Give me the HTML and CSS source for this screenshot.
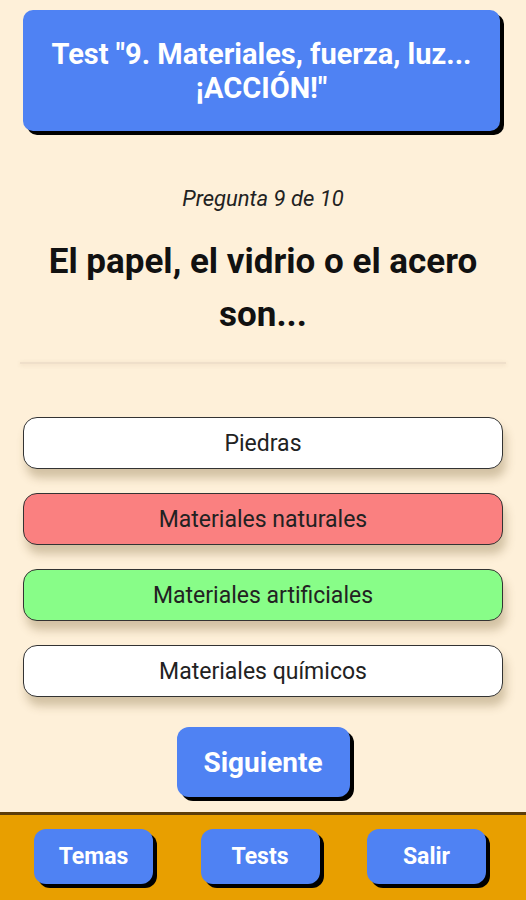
FILE: index.html
```html
<!DOCTYPE html>
<html lang="es">
<head>
    <meta charset="UTF-8">
    <meta name="viewport" content="width=device-width, initial-scale=1.0">
    <title>Test</title>
    <link rel="stylesheet" href="styles.css">
</head>
<body>
    <main>
        <header class="test-title">Test "9. Materiales, fuerza, luz... ¡ACCIÓN!"</header>

        <p class="counter">Pregunta 9 de 10</p>
        <h1 class="question">El papel, el vidrio o el acero son...</h1>
        <hr class="divider">

        <section class="answers">
            <button class="answer">Piedras</button>
            <button class="answer wrong">Materiales naturales</button>
            <button class="answer right">Materiales artificiales</button>
            <button class="answer">Materiales químicos</button>
        </section>

        <div class="next-row">
            <button class="btn next-btn">Siguiente</button>
        </div>
    </main>
    <footer class="bottom-bar">
        <button class="btn nav-btn">Temas</button>
        <button class="btn nav-btn">Tests</button>
        <button class="btn nav-btn">Salir</button>
    </footer>
</body>
</html>
```
FILE: styles.css
```css
*{
    box-sizing: border-box;
}
html, body{
    height: 100%;
}
body{
    margin: 0;
    background-color: #fef0d9;
    font-family: Roboto, "Liberation Sans", sans-serif;
    display: flex;
    flex-direction: column;
    overflow: hidden;
}
main{
    flex: 1;
    padding: 10px 23px 0 23px;
    display: flex;
    flex-direction: column;
}

.test-title{
    background-color: #4f82f3;
    color: white;
    font-weight: bold;
    font-size: 29px;
    line-height: 34px;
    text-align: center;
    border-radius: 10px;
    box-shadow: 4px 4px 0 #000;
    height: 121px;
    width: 477px;
    display: flex;
    align-items: center;
    justify-content: center;
    padding: 0 10px;
}

.counter{
    margin: 56px 0 0 0;
    text-align: center;
    font-style: italic;
    font-size: 22px;
    color: #222;
    line-height: 24px;
}

.question{
    margin: 24px 0 0 0;
    text-align: center;
    font-size: 35px;
    line-height: 53px;
    color: #111;
    padding: 0 10px;
}

.divider{
    margin: 21px -3px 0 -3px;
    border: none;
    height: 2px;
    background-color: #efdfca;
    box-shadow: 0 1px 4px rgba(120, 90, 50, 0.15);
}

.answers{
    margin-top: 53px;
    display: flex;
    flex-direction: column;
    gap: 24px;
}
.answer{
    height: 52px;
    width: 480px;
    background-color: white;
    border: 1.5px solid #333;
    border-radius: 14px;
    font-family: Roboto, "Liberation Sans", sans-serif;
    font-size: 23px;
    color: #222;
    box-shadow: 3px 9px 10px rgba(110, 85, 40, 0.3);
}
.wrong{
    background-color: #fa8080;
}
.right{
    background-color: #88fd88;
}

.btn{
    background-color: #4f82f3;
    color: white;
    font-family: Roboto, "Liberation Sans", sans-serif;
    font-weight: bold;
    border: none;
    box-shadow: 4px 4px 0 #000;
    cursor: pointer;
}

.next-row{
    display: flex;
    justify-content: center;
    margin-top: 30px;
}
.next-btn{
    width: 173px;
    height: 70px;
    border-radius: 12px;
    font-size: 28px;
}

.bottom-bar{
    height: 88px;
    background-color: #e89f00;
    border-top: 3px solid #5b3d0b;
    display: flex;
    justify-content: space-between;
    padding: 14px 40px 0 34px;
}
.nav-btn{
    width: 119px;
    height: 55px;
    border-radius: 12px;
    font-size: 23px;
}
```
